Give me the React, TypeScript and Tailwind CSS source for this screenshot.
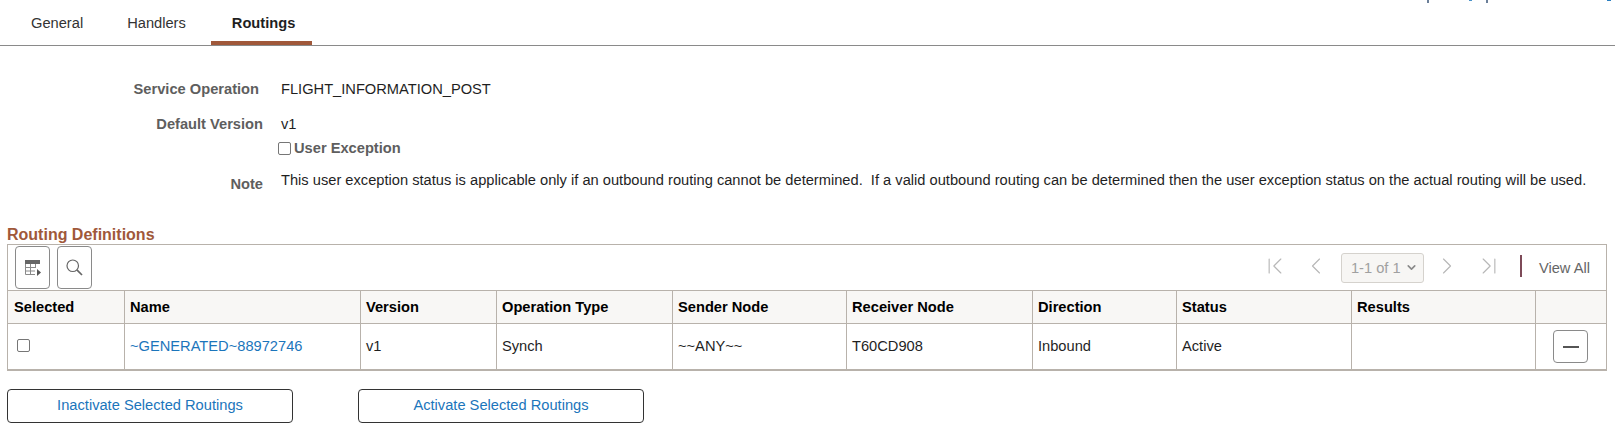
import React from 'react';
import { ChevronDown, ChevronLeft, ChevronRight, ChevronFirst, ChevronLast } from 'lucide-react';

const columns = [
  { label: 'Selected', w: 'w-[117px]' },
  { label: 'Name', w: 'w-[236px]' },
  { label: 'Version', w: 'w-[136px]' },
  { label: 'Operation Type', w: 'w-[176px]' },
  { label: 'Sender Node', w: 'w-[174px]' },
  { label: 'Receiver Node', w: 'w-[186px]' },
  { label: 'Direction', w: 'w-[144px]' },
  { label: 'Status', w: 'w-[175px]' },
  { label: 'Results', w: 'w-[184px]' },
  { label: '', w: 'flex-1' },
];

const row = ['', '~GENERATED~88972746', 'v1', 'Synch', '~~ANY~~', 'T60CD908', 'Inbound', 'Active', '', ''];

const GridIcon = () => (
  <svg width="16" height="16" viewBox="0 0 16 16" fill="none">
    <rect x="0" y="0" width="15" height="4" fill="#666" />
    <path d="M0.5 4v10.5H10M0.5 7.5H11M0.5 11H10M5.5 4v10.5M10.5 4v4" stroke="#8a8a8a" />
    <path d="M12 9l4 3.5-4 3.5z" fill="#555" />
  </svg>
);

const SearchIcon = () => (
  <svg width="17" height="17" viewBox="0 0 17 17" fill="none" stroke="#666">
    <circle cx="6.75" cy="6.75" r="5.75" strokeWidth="1.2" />
    <path d="M10.9 10.9L16 16" strokeWidth="1.7" />
  </svg>
);

export default function App() {
  return (
    <div className="relative w-[1615px] h-[429px] overflow-hidden bg-white font-['Liberation_Sans',Arial,sans-serif] text-[14.67px] leading-5 text-[#1f1f1f]">
      {/* bits of the line cut off above the page */}
      <span className="absolute left-[1427px] top-0 h-[3px] w-[2px] bg-[#6b7f99]" />
      <span className="absolute left-[1469px] top-0 h-[1px] w-[3px] bg-[#4a93c9]" />
      <span className="absolute left-[1486px] top-0 h-[3px] w-[2px] bg-[#6b7f99]" />
      <span className="absolute left-[1607px] top-0 h-[1px] w-[4px] bg-[#2b7fc0]" />

      <div className="flex h-[46px] border-b border-[#8a8a8a] pl-[8px]">
        <div className="pl-[23px] pr-[22px] pt-[13px] text-[#333]">General</div>
        <div className="px-[22px] pt-[13px] text-[#333]">Handlers</div>
        <div className="ml-[3px] h-[45px] w-[101px] border-b-4 border-[#a0583a] pl-[21px] pt-[13px] font-bold">Routings</div>
      </div>

      <div className="mt-[33px] grid grid-cols-[263px_1fr] gap-x-[18px]">
        <div className="pr-[4px] text-right font-bold text-[#5e5e5e]">Service Operation</div>
        <div>FLIGHT_INFORMATION_POST</div>
        <div className="mt-[15px] text-right font-bold text-[#5e5e5e]">Default Version</div>
        <div className="mt-[15px]">v1</div>
        <div />
        <label className="mt-[4px] flex items-center font-bold text-[#5e5e5e]">
          <span className="ml-[-3px] mr-[3px] h-[13px] w-[13px] rounded-[2px] border border-[#767676] bg-white" />
          User Exception
        </label>
        <div className="mt-[16px] text-right font-bold text-[#5e5e5e]">Note</div>
        <div className="mt-[12px]">This user exception status is applicable only if an outbound routing cannot be determined.&nbsp; If a valid outbound routing can be determined then the user exception status on the actual routing will be used.</div>
      </div>

      <div className="mt-[32px] pl-[7px] pr-[8px]">
        <div className="text-base leading-[18px] font-bold text-[#a0583a]">Routing Definitions</div>
        <div className="border border-b-2 border-[#b8b2ab]">
          <div className="flex h-[45px] items-center pl-[7px] pr-[16px]">
            <button className="flex h-[43px] w-[35px] items-center justify-center rounded-[4px] border border-[#8a8a8a]"><GridIcon /></button>
            <button className="ml-[7px] flex h-[43px] w-[35px] items-center justify-center rounded-[4px] border border-[#8a8a8a]"><SearchIcon /></button>
            <div className="ml-auto flex items-center text-[#b8b8b8]">
              <ChevronFirst size={28} strokeWidth={1} className="mt-[-4px]" />
              <ChevronLeft size={28} strokeWidth={1} className="ml-[13px] mt-[-4px]" />
              <div className="ml-[11px] flex h-[30px] w-[83px] items-center justify-between rounded-[3px] border border-[#d5d2cd] bg-[#f7f6f4] pl-[9px] pr-[5px] text-[#a0a0a0]">1-1 of 1<ChevronDown size={13} strokeWidth={3} color="#8a8a8a" /></div>
              <ChevronRight size={28} strokeWidth={1} className="ml-[9px] mt-[-4px]" />
              <ChevronLast size={28} strokeWidth={1} className="ml-[14px] mt-[-4px]" />
              <div className="ml-[17px] mr-[17px] mt-[-3px] h-[22px] w-[2px] bg-[#7d4a58]" />
              <span className="text-[#666]">View All</span>
            </div>
          </div>
          <div className="flex h-[34px] border-y border-[#b8b2ab] bg-[#f8f7f5]">
            {columns.map((c, i) => (
              <div key={i} className={`${c.w} flex items-center border-r border-[#b8b2ab] font-bold text-black last:border-r-0 ${i === 0 ? 'pl-[6px]' : 'pl-[5px]'}`}>{c.label}</div>
            ))}
          </div>
          <div className="flex h-[45px]">
            {columns.map((c, i) => (
              <div key={i} className={`${c.w} flex items-center border-r border-[#b8b2ab] pb-[2px] last:border-r-0 last:pb-0 ${i === 0 ? 'pl-[6px]' : 'pl-[5px]'} ${i === 1 ? 'text-[#1b75bb]' : ''}`}>
                {i === 0 && <span className="ml-[3px] h-[13px] w-[13px] rounded-[2px] border border-[#767676]" />}
                {i === 9 && (
                  <button className="ml-[12px] flex h-[33px] w-[35px] items-center justify-center rounded-[4px] border border-[#8a8a8a]"><span className="h-[2px] w-[16px] bg-[#555]" /></button>
                )}
                {row[i]}
              </div>
            ))}
          </div>
        </div>
        <div className="mt-[18px] flex gap-[65px]">
          <button className="h-[34px] w-[286px] rounded-[4px] border border-[#333] pb-[2px] text-[#1b75bb]">Inactivate Selected Routings</button>
          <button className="h-[34px] w-[286px] rounded-[4px] border border-[#333] pb-[2px] text-[#1b75bb]">Activate Selected Routings</button>
        </div>
      </div>
    </div>
  );
}
